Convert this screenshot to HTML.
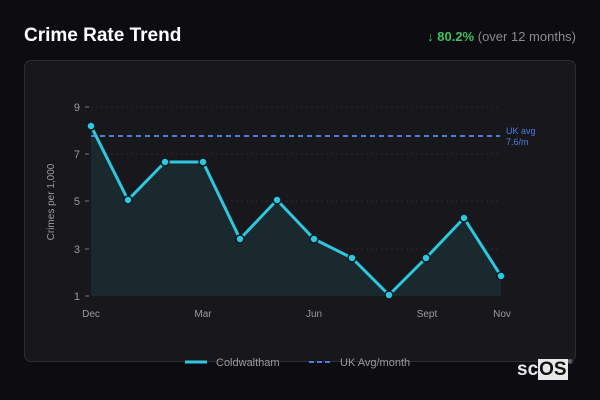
<!DOCTYPE html><html><head><style>
body{margin:0;width:600px;height:400px;background:#0d0d11;font-family:"Liberation Sans","DejaVu Sans",sans-serif;position:relative;overflow:hidden}
.t{position:absolute;left:24px;top:25px;color:#fff;font-weight:bold;font-size:19px}
.r{position:absolute;right:24px;top:29px;font-size:13px;color:#8a8a8f}
.r b{color:#3fbf5f}
.card{position:absolute;left:24px;top:60px;width:550px;height:300px;background:#18181c;border:1px solid #2d2d32;border-radius:7px}
svg{position:absolute;left:0;top:0}
.logo{position:absolute;left:517px;top:359px;font-size:19px;font-weight:bold;color:#e8e8e8}
.logo span{background:#e8e8e8;color:#111;padding:0 1px}
</style></head><body>
<div class="t">Crime Rate Trend</div>
<div class="r"><b>↓ 80.2%</b> (over 12 months)</div>
<div class="card"></div>
<svg width="600" height="400" font-family="Liberation Sans,DejaVu Sans,sans-serif">
<g stroke="#2a2a2e" stroke-dasharray="2,3"><line x1="91" y1="107" x2="500" y2="107"/><line x1="91" y1="154" x2="500" y2="154"/><line x1="91" y1="201" x2="500" y2="201"/><line x1="91" y1="249" x2="500" y2="249"/></g>
<g fill="#9a9aa0" font-size="11" text-anchor="end"><text x="80" y="111">9</text><text x="80" y="158">7</text><text x="80" y="205">5</text><text x="80" y="253">3</text><text x="80" y="300">1</text></g>
<g stroke="#777" ><line x1="85" y1="107" x2="89" y2="107"/><line x1="85" y1="154" x2="89" y2="154"/><line x1="85" y1="201" x2="89" y2="201"/><line x1="85" y1="249" x2="89" y2="249"/><line x1="85" y1="296" x2="89" y2="296"/></g>
<text transform="translate(54,202) rotate(-90)" fill="#9a9aa0" font-size="10" text-anchor="middle">Crimes per 1,000</text>
<polygon fill="#19292e" points="91,296 91,126 128,200 165,162 203,162 240,239 277,200 314,239 352,258 389,295 426,258 464,218 501,276 501,296"/>
<line x1="91" y1="136" x2="500" y2="136" stroke="#4a7fe0" stroke-width="2" stroke-dasharray="5,4"/>
<polyline fill="none" stroke="#2ec7e0" stroke-width="3" stroke-linejoin="round" points="91,126 128,200 165,162 203,162 240,239 277,200 314,239 352,258 389,295 426,258 464,218 501,276"/>
<g fill="#2ec7e0" stroke="#0e1a1e" stroke-width="1.5"><circle cx="91" cy="126" r="4"/><circle cx="128" cy="200" r="4"/><circle cx="165" cy="162" r="4"/><circle cx="203" cy="162" r="4"/><circle cx="240" cy="239" r="4"/><circle cx="277" cy="200" r="4"/><circle cx="314" cy="239" r="4"/><circle cx="352" cy="258" r="4"/><circle cx="389" cy="295" r="4"/><circle cx="426" cy="258" r="4"/><circle cx="464" cy="218" r="4"/><circle cx="501" cy="276" r="4"/></g>
<g fill="#4a7fe0" font-size="9"><text x="506" y="134">UK avg</text><text x="506" y="145">7.6/m</text></g>
<g fill="#9a9aa0" font-size="10" text-anchor="middle"><text x="91" y="317">Dec</text><text x="203" y="317">Mar</text><text x="314" y="317">Jun</text><text x="427" y="317">Sept</text><text x="502" y="317">Nov</text></g>
<line x1="185" y1="362" x2="207" y2="362" stroke="#2ec7e0" stroke-width="3"/>
<text x="216" y="366" fill="#9a9aa0" font-size="11">Coldwaltham</text>
<line x1="309" y1="362" x2="331" y2="362" stroke="#4a7fe0" stroke-width="2" stroke-dasharray="5,3"/>
<text x="340" y="366" fill="#9a9aa0" font-size="11">UK Avg/month</text>
<text x="568" y="364" fill="#ccc" font-size="6">®</text>
</svg>
<div class="logo">sc<span>OS</span></div>
</body></html>
